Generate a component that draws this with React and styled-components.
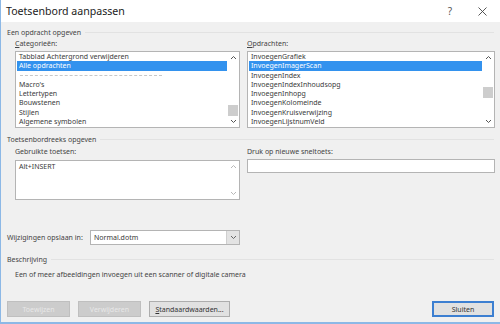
import React from "react";
import styled, { createGlobalStyle } from "styled-components";

const GlobalStyle = createGlobalStyle`
  html, body {
    margin: 0;
    padding: 0;
    background: #f0f0f0;
  }
  body {
    font-family: "Noto Sans", "Open Sans", sans-serif;
    font-size: 7px;
    color: #3a3a3a;
  }
`;

const Window = styled.div`
  width: 500px;
  height: 324px;
  box-sizing: border-box;
  border-left: 1px solid #8cb8e6;
  border-bottom: 2px solid #8cb8e6;
  background: #f0f0f0;
  display: flex;
  flex-direction: column;
  overflow: hidden;
`;

const TitleBar = styled.div`
  height: 22px;
  background: #fff;
  display: flex;
  align-items: center;
  padding: 0 2px 0 5px;
  font-size: 10.6px;
  color: #222;
`;

const Title = styled.div`
  flex: 1;
`;

const TitleButton = styled.div`
  width: 32px;
  display: flex;
  justify-content: center;
  font-size: 10px;
  color: #555;
`;

const Body = styled.div`
  flex: 1;
  display: flex;
  flex-direction: column;
  padding: 3px 6px 0 6px;
`;

const SectionHead = styled.div`
  display: flex;
  align-items: center;
  gap: 4px;
  height: 14px;
  color: #444;
  white-space: nowrap;
  margin-top: ${(p) => p.$top || 0}px;

  &::after {
    content: "";
    flex: 1;
    height: 1px;
    background: #e2e2e2;
  }
`;

const TwoCols = styled.div`
  display: grid;
  grid-template-columns: 225px 248px;
  column-gap: 7px;
  padding-left: 8px;
`;

const Label = styled.div`
  height: 10px;
  line-height: 10px;
  margin-top: ${(p) => p.$mt || 0}px;
  margin-bottom: ${(p) => p.$gap || 2}px;
  color: #444;
  white-space: nowrap;
`;

const Key = styled.span`
  text-decoration: underline;
`;

const ListBox = styled.div`
  height: 77px;
  box-sizing: border-box;
  border: 1px solid #b4b4b4;
  background: #fff;
  display: flex;
  overflow: hidden;
`;

const Items = styled.div`
  flex: 1;
  padding: 0 0 0 1px;
  overflow: hidden;
`;

const Item = styled.div`
  height: 9.3px;
  line-height: 9.3px;
  padding-left: 2px;
  white-space: nowrap;
  color: ${(p) => (p.$selected ? "#fff" : "#3a3a3a")};
  background: ${(p) => (p.$selected ? "#3392ee" : "transparent")};
`;

const Dashes = styled.div`
  height: 9.3px;
  display: flex;
  align-items: center;
  padding-left: 3px;

  &::before {
    content: "";
    width: 142px;
    border-top: 1px dashed #c8c8c8;
  }
`;

const ScrollBar = styled.div`
  width: 12px;
  display: flex;
  flex-direction: column;
  align-items: center;
  background: #fff;
`;

const Arrow = styled.div`
  height: 11px;
  display: flex;
  align-items: center;
  justify-content: center;
`;

const Track = styled.div`
  flex: 1;
  width: 100%;
  position: relative;
`;

const Thumb = styled.div`
  position: absolute;
  left: 1px;
  right: 1px;
  height: 11px;
  background: #cdcdcd;
`;

const KeysBox = styled.div`
  height: 40px;
  box-sizing: border-box;
  border: 1px solid #b4b4b4;
  background: #fff;
  display: flex;
`;

const KeysText = styled.div`
  flex: 1;
  padding: 1px 3px;
`;

const TextInput = styled.div`
  height: 14px;
  box-sizing: border-box;
  border: 1px solid #b4b4b4;
  background: #fff;
`;

const SaveRow = styled.div`
  display: flex;
  align-items: center;
  margin-top: 30px;
  height: 15px;
`;

const SaveLabel = styled.div`
  width: 83px;
  color: #444;
  white-space: nowrap;
`;

const Combo = styled.div`
  width: 150px;
  height: 15px;
  box-sizing: border-box;
  border: 1px solid #b4b4b4;
  background: #fff;
  display: flex;
  align-items: center;
`;

const ComboText = styled.div`
  flex: 1;
  padding-left: 3px;
`;

const ComboButton = styled.div`
  width: 12px;
  height: 13px;
  background: #e3e3e3;
  border-left: 1px solid #cfcfcf;
  display: flex;
  align-items: center;
  justify-content: center;
`;

const Description = styled.div`
  padding-left: 8px;
  margin-top: 4px;
  color: #444;
`;

const ButtonRow = styled.div`
  display: flex;
  align-items: center;
  margin-top: 22px;
  gap: 8px;
`;

const Button = styled.div`
  height: 16px;
  width: ${(p) => p.$w}px;
  box-sizing: border-box;
  display: flex;
  align-items: center;
  justify-content: center;
  background: ${(p) => (p.$disabled ? "#cccccc" : "#e1e1e1")};
  border: ${(p) =>
    p.$primary ? "2px solid #3c7fd1" : p.$disabled ? "1px solid #bfbfbf" : "1px solid #adadad"};
  color: ${(p) => (p.$disabled ? "#e8e8e8" : "#333")};
`;

const Spacer = styled.div`
  flex: 1;
`;

const Chevron = ({ up, color = "#555" }) => (
  <svg width="7" height="5" viewBox="0 0 7 5">
    <path
      d={up ? "M1 4 L3.5 1.5 L6 4" : "M1 1 L3.5 3.5 L6 1"}
      fill="none"
      stroke={color}
      strokeWidth="1"
    />
  </svg>
);

const CloseIcon = () => (
  <svg width="9" height="9" viewBox="0 0 9 9">
    <path d="M0.5 0.5 L8.5 8.5 M8.5 0.5 L0.5 8.5" stroke="#444" strokeWidth="0.9" />
  </svg>
);

const Scroll = ({ thumbTop, thumb = true, color }) => (
  <ScrollBar>
    <Arrow>
      <Chevron up color={color} />
    </Arrow>
    <Track>{thumb && <Thumb style={{ top: thumbTop }} />}</Track>
    <Arrow>
      <Chevron color={color} />
    </Arrow>
  </ScrollBar>
);

const categories = [
  "Tabblad Achtergrond verwijderen",
  "Alle opdrachten",
  "---",
  "Macro's",
  "Lettertypen",
  "Bouwstenen",
  "Stijlen",
  "Algemene symbolen",
];

const commands = [
  "InvoegenGrafiek",
  "InvoegenImagerScan",
  "InvoegenIndex",
  "InvoegenIndexInhoudsopg",
  "InvoegenInhopg",
  "InvoegenKolomeinde",
  "InvoegenKruisverwijzing",
  "InvoegenLijstnumVeld",
];

const App = () => (
  <>
    <GlobalStyle />
    <Window>
      <TitleBar>
        <Title>Toetsenbord aanpassen</Title>
        <TitleButton>?</TitleButton>
        <TitleButton>
          <CloseIcon />
        </TitleButton>
      </TitleBar>
      <Body>
        <SectionHead>Een opdracht opgeven</SectionHead>
        <TwoCols>
          <div>
            <Label>
              <Key>C</Key>ategorieën:
            </Label>
            <ListBox>
              <Items>
                {categories.map((c, i) =>
                  c === "---" ? (
                    <Dashes key={i} />
                  ) : (
                    <Item key={i} $selected={i === 1}>
                      {c}
                    </Item>
                  )
                )}
              </Items>
              <Scroll thumbTop={42} />
            </ListBox>
          </div>
          <div>
            <Label>
              <Key>O</Key>pdrachten:
            </Label>
            <ListBox>
              <Items>
                {commands.map((c, i) => (
                  <Item key={i} $selected={i === 1}>
                    {c}
                  </Item>
                ))}
              </Items>
              <Scroll thumbTop={24} />
            </ListBox>
          </div>
        </TwoCols>
        <SectionHead $top={4}>Toetsenbordreeks opgeven</SectionHead>
        <TwoCols>
          <div>
            <Label $mt={1} $gap={3}>Gebruikte toetsen:</Label>
            <KeysBox>
              <KeysText>Alt+INSERT</KeysText>
              <Scroll thumb={false} color="#b8b8b8" />
            </KeysBox>
          </div>
          <div>
            <Label $mt={1} $gap={2}>Druk op nieuwe sneltoets:</Label>
            <TextInput />
          </div>
        </TwoCols>
        <SaveRow>
          <SaveLabel>Wijzigingen opslaan in:</SaveLabel>
          <Combo>
            <ComboText>Normal.dotm</ComboText>
            <ComboButton>
              <Chevron color="#666" />
            </ComboButton>
          </Combo>
        </SaveRow>
        <SectionHead $top={7}>Beschrijving</SectionHead>
        <Description>
          Een of meer afbeeldingen invoegen uit een scanner of digitale camera
        </Description>
        <ButtonRow>
          <Button $w={63} $disabled>
            Toewijzen
          </Button>
          <Button $w={63} $disabled>
            Verwijderen
          </Button>
          <Button $w={81}>
            <span>
              <Key>S</Key>tandaardwaarden...
            </span>
          </Button>
          <Spacer />
          <Button $w={62} $primary>
            Sluiten
          </Button>
        </ButtonRow>
      </Body>
    </Window>
  </>
);

export default App;
